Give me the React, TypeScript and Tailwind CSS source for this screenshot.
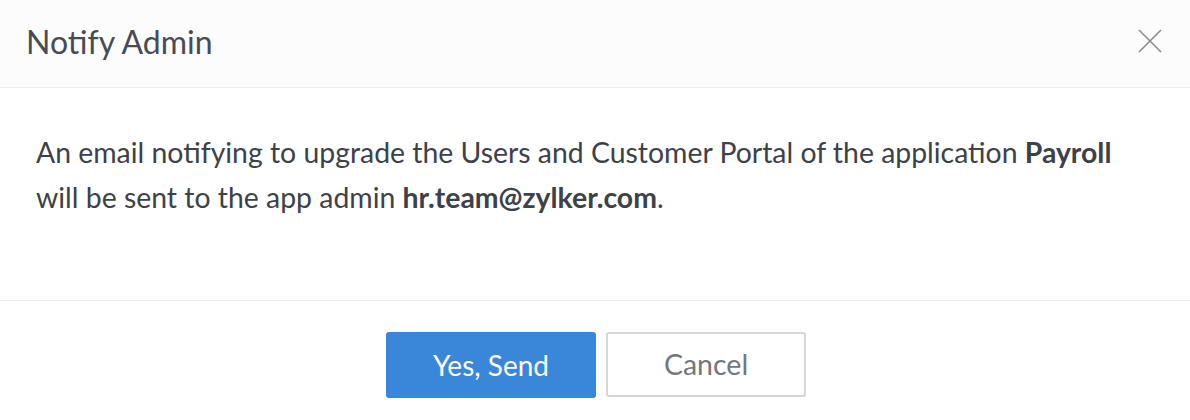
export default function App() {
    return (
        <div className="w-[1190px] h-[420px] bg-white text-[#3d4148] font-['Lato','Liberation_Sans',sans-serif]">
            <div className="h-[88px] flex items-center justify-between bg-[#fcfcfc] border-b border-[#eeeeee] pl-[26px] pr-[28px]">
                <h2 className="text-[32px] leading-[40px] -mt-[4px] text-[#474c54]">Notify Admin</h2>
                <button className="w-[24px] h-[24px] text-[#8c8c8c] -mt-[6px]">
                    <svg viewBox="0 0 24 24" width="24" height="24" stroke="currentColor" strokeWidth="1.6" fill="none">
                        <path d="M1 1L23 23M23 1L1 23" />
                    </svg>
                </button>
            </div>
            <div className="h-[213px] border-b border-[#eeeeee] pl-[36px] pr-[30px] pt-[42px]">
                <p className="text-[28.4px] leading-[45px]">
                    An email notifying to upgrade the Users and Customer Portal of the application <b>Payroll</b>
                    <br />
                    will be sent to the app admin <b>hr.team@zylker.com</b>.
                </p>
            </div>
            <div className="flex justify-center gap-[10px] pt-[31px] pl-[2px]">
                <button className="w-[210px] h-[66px] rounded-[3px] bg-[#3a87d9] text-white text-[28px]">Yes, Send</button>
                <button className="w-[200px] h-[65px] rounded-[3px] border-2 border-[#d6d6d6] bg-white text-[#73777d] text-[28.5px]">Cancel</button>
            </div>
        </div>
    )
}
